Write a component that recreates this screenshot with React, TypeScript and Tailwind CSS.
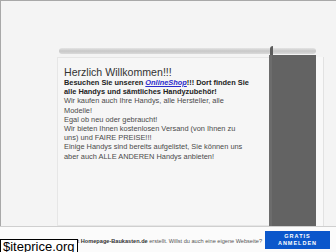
export default function App() {
  return (
    <div className="relative flex h-[252px] w-[336px] flex-col overflow-hidden bg-[#f4f4f4] font-['Liberation_Sans',Arial,sans-serif]">
      {/* page frame */}
      <div className="flex h-[226px] flex-col border-l border-t border-[#a8a8a8] pl-[56px] pt-[47px]">
        {/* top rail */}
        <div className="relative ml-[2px] h-[6px] w-[257px] rounded-[3px] bg-gradient-to-b from-[#e4e4e4] via-[#c8c8c8] to-[#dadada]">
          <div className="absolute left-[211px] top-[-2px] h-[9px] w-[3px] rounded-tl-[3px] bg-[#5c5c5c]" />
        </div>
        <div className="mt-[1px] flex flex-1">
          <div className="mt-[2px] w-[212px] border border-r-0 border-[#e6e6e6] bg-[#f6f6f6] px-[6px] pt-[8px] text-[#333]">
            <h1 className="text-[10.6px] leading-[12px]">Herzlich Willkommen!!!</h1>
            <div className="text-[7.4px] leading-[9.2px]">
              <p className="font-bold text-[#222]">
                Besuchen Sie unseren{' '}
                <a href="#" className="italic text-[#2a2acc] underline">
                  OnlineShop
                </a>
                !!! Dort finden Sie
                <br />
                alle Handys und sämtliches Handyzubehör!
              </p>
              <p className="text-[#4a4a4a]">
                Wir kaufen auch Ihre Handys, alle Hersteller, alle
                <br />
                Modelle!
                <br />
                Egal ob neu oder gebraucht!
                <br />
                Wir bieten Ihnen kostenlosen Versand (von Ihnen zu
                <br />
                uns) und FAIRE PREISE!!!
                <br />
                Einige Handys sind bereits aufgelistet, Sie können uns
                <br />
                aber auch ALLE ANDEREN Handys anbieten!
              </p>
            </div>
          </div>
          <div className="w-[47px] border-l-[3px] border-[#6c6c6c] bg-[#636363]" />
          <div className="mt-[2px] w-[8px] border-r border-[#e2e2e2] bg-[#f8f8f8]" />
        </div>
      </div>

      {/* footer bar */}
      <div className="flex flex-1 items-center justify-end gap-[3px] overflow-hidden border-t border-[#cfcfcf] bg-[#fbfbfb] pr-[6px]">
        <p className="mt-[3px] shrink-0 whitespace-nowrap text-[5.6px] text-[#555]">
          Diese Webseite wurde kostenlos mit <b className="text-[#333]">Homepage-Baukasten.de</b> erstellt. Willst du auch eine eigene Webseite?
        </p>
        <button className="flex h-[18px] w-[65px] shrink-0 flex-col items-center justify-center bg-[#0b57cb] text-[5.5px] font-bold leading-[7px] tracking-[1px] text-white">
          <span>GRATIS</span>
          <span>ANMELDEN</span>
        </button>
      </div>

      {/* watermark */}
      <div className="absolute bottom-[-3px] left-0 border border-black bg-white px-[2px] text-[13px] leading-[14px] text-black">
        $iteprice.org
      </div>
    </div>
  );
}
